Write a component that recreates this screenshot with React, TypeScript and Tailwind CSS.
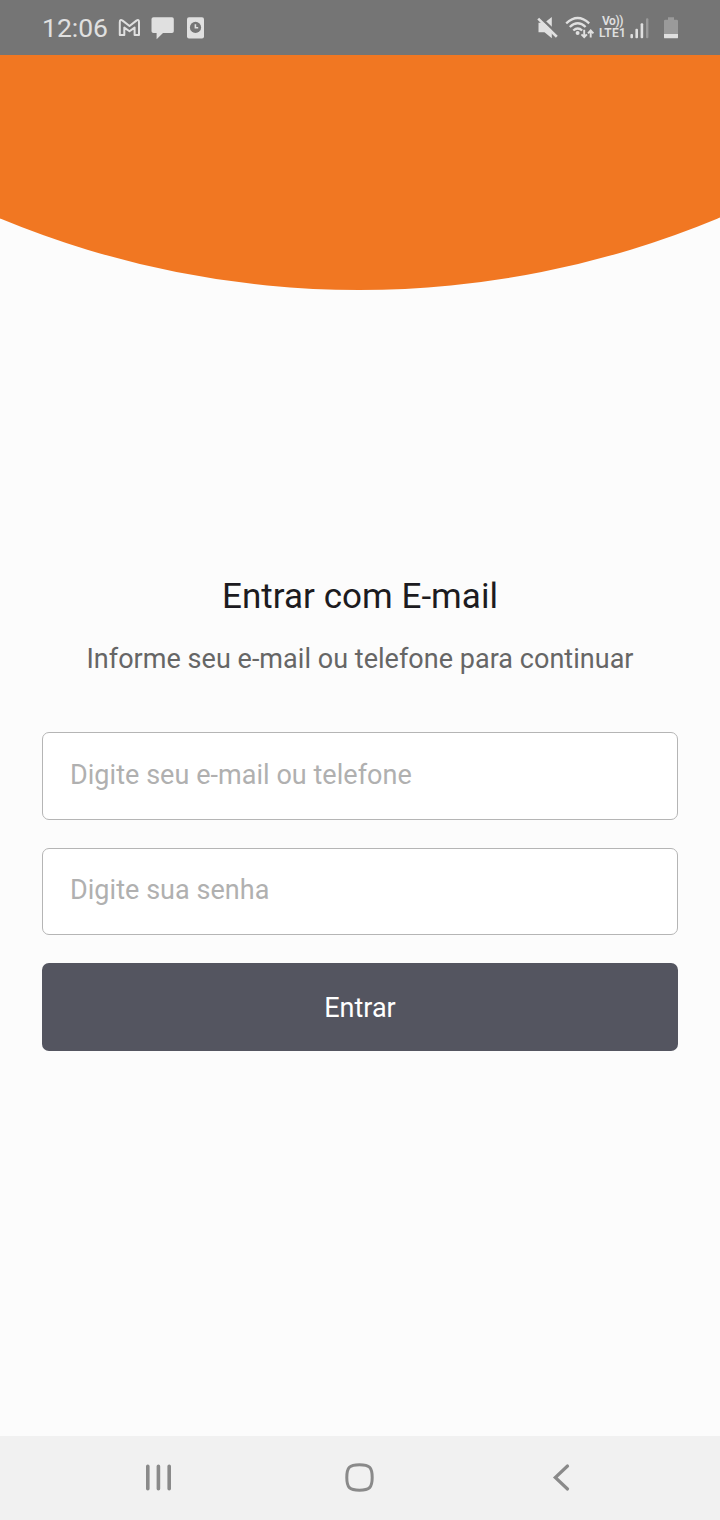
// App.tsx

import { useState } from 'react';

function StatusBar() {
  return (
    <header className="flex h-[55px] items-center justify-between bg-[#757575] pl-[42px] pr-[41px] text-[#e0e0e0]">
      <div className="flex items-center">
        <span className="w-[76px] pt-px text-[26.5px] leading-none">12:06</span>

        {/* Gmail */}
        <svg className="h-6 w-6" viewBox="0 0 24 24" fill="none" stroke="currentColor" strokeWidth="2" strokeLinejoin="round">
          <path d="M1.8 18.9V6.2Q1.8 3 4.6 4.6L11.5 10L18.4 4.6Q21 3 21 6.2V18.9H16.6V11.6L11.5 15.3L6.3 11.6V18.9Z" />
        </svg>

        {/* Mesaj */}
        <svg className="ml-[9px] h-6 w-6" viewBox="0 0 24 24" fill="currentColor">
          <path d="M2.5 1.2H21Q22.8 1.2 22.8 3V15.2Q22.8 17 21 17H12L5.6 23.3V17H2.5Q.5 17 .5 15.2V3Q.5 1.2 2.5 1.2Z" />
        </svg>

        {/* Saat */}
        <svg className="ml-2 h-6 w-6" viewBox="0 0 24 24">
          <rect x="4" y="1.2" width="17" height="21.3" rx="2" fill="currentColor" />
          <circle cx="12.5" cy="11.4" r="5.6" fill="#757575" />
          <path d="M12.4 8.2V11.8H15.2" fill="none" stroke="currentColor" strokeWidth="1.6" />
        </svg>
      </div>

      <div className="flex items-center">
        <svg className="h-6 w-6" viewBox="0 0 24 24" fill="currentColor">
          <path d="M2.5 6.8H8.5L15.8 1V22.3L8.5 16.3H2.5Z" />
          <path d="M4.4 1.6L22.5 18.8" stroke="#757575" strokeWidth="2.6" />
          <path d="M2.2 2.6L20.8 20.8" stroke="currentColor" strokeWidth="2.6" />
        </svg>

        <svg className="ml-[5px] h-6 w-[30px]" viewBox="0 0 30 24" fill="none" stroke="currentColor" strokeWidth="2.3">
          <path d="M1.2 7.4Q12.7-3.4 24.2 7.4M4.8 11Q12.7 3.5 20.6 11M8.3 14.5Q12.7 10.5 17.2 14.5" />
          <circle cx="12.6" cy="17" r="2" fill="currentColor" stroke="none" />
          <path d="M19.2 13.8V21M16.5 18.3L19.2 21.2L21.9 18.3M25.7 21.6V14.8M23 17.4L25.7 14.5L28.4 17.4" strokeWidth="1.9" />
        </svg>

        <div className="ml-1 flex w-[27px] flex-col items-center text-[12px] font-semibold leading-[11.5px]">
          <span className="tracking-[-0.4px]">Vo))</span>
          <span className="tracking-[0.2px]">LTE1</span>
        </div>

        <svg className="ml-1 h-6 w-5" viewBox="0 0 20 24" fill="currentColor">
          <rect x="0.4" y="18" width="2.6" height="4.3" rx="1" />
          <rect x="5.4" y="12.8" width="2.6" height="9.5" rx="1" />
          <rect x="10.6" y="7.3" width="2.6" height="15" rx="1" />
          <rect x="16" y="2.3" width="2.4" height="20" rx="1" opacity="0.35" />
        </svg>

        <svg className="ml-[13px] h-6 w-4" viewBox="0 0 16 24" fill="currentColor">
          <path d="M2.2 3.8H5V1.2H11V3.8H13.8Q15 3.8 15 5V18H1V5Q1 3.8 2.2 3.8Z" opacity="0.35" />
          <path d="M1 18H15V21.4Q15 22.3 14 22.3H2Q1 22.3 1 21.4Z" />
        </svg>
      </div>
    </header>
  );
}

function NavigationBar() {
  return (
    <nav className="flex h-[84px] items-center bg-[#f1f1f1] pl-[143px] text-[#8a8a8a]">
      <button aria-label="Recentes">
        <svg className="h-8 w-8" viewBox="0 0 32 32" stroke="currentColor" strokeWidth="3.6" strokeLinecap="round">
          <path d="M4.8 4.3V26.7M15.4 4.3V26.7M26.2 4.3V26.7" />
        </svg>
      </button>
      <button aria-label="Início" className="ml-[169px]">
        <svg className="h-8 w-8" viewBox="0 0 32 32" fill="none" stroke="currentColor" strokeWidth="3">
          <path d="M15.5 2.7C25.5 2.7 28.2 5.4 28.2 15.5C28.2 25.5 25.5 28.2 15.5 28.2C5.5 28.2 2.8 25.5 2.8 15.5C2.8 5.4 5.5 2.7 15.5 2.7Z" />
        </svg>
      </button>
      <button aria-label="Voltar" className="ml-[169px]">
        <svg className="h-8 w-8" viewBox="0 0 32 32" fill="none" stroke="currentColor" strokeWidth="3.2" strokeLinecap="round">
          <path d="M22.5 4L10.3 15.5L22.5 27" />
        </svg>
      </button>
    </nav>
  );
}

export default function App() {
  const [email, setEmail] = useState('');
  const [password, setPassword] = useState('');

  const inputClass =
    "block w-full rounded-[7px] border border-[#b5b5b5] bg-white px-[27px] text-[27px] tracking-[0.04px] text-[#333] outline-none placeholder:text-[#b0b0b0]";

  return (
    <div className="flex h-[1520px] w-[720px] flex-col overflow-hidden bg-[#fcfcfc] font-[Roboto,sans-serif]">
      <StatusBar />

      {/* Üst kavis */}
      <svg className="block h-[236px] w-full shrink-0" viewBox="0 0 720 236">
        <circle cx="359" cy="-701" r="936" fill="#f17722" />
      </svg>

      <main className="flex-1 px-[42px] pt-[282px]">
        <h1 className="text-center text-[35px] leading-[48px] tracking-[0.04px] text-[#1c1b20]">Entrar com E-mail</h1>
        <p className="mt-5 text-center text-[27px] leading-[36px] tracking-[0.03px] text-[#666]">
          Informe seu e-mail ou telefone para continuar
        </p>

        <form className="mt-[55px]" onSubmit={(e) => e.preventDefault()}>
          <input
            className={`${inputClass} h-[88px] pb-[3px]`}
            placeholder="Digite seu e-mail ou telefone"
            value={email}
            onChange={(e) => setEmail(e.target.value)}
          />
          <input
            type="password"
            className={`${inputClass} mt-7 h-[87px] pb-1`}
            placeholder="Digite sua senha"
            value={password}
            onChange={(e) => setPassword(e.target.value)}
          />
          <button className="mt-7 block h-[88px] w-full rounded-[7px] bg-[#545560] pt-[2px] text-[27px] text-white">
            Entrar
          </button>
        </form>
      </main>

      <NavigationBar />
    </div>
  );
}
